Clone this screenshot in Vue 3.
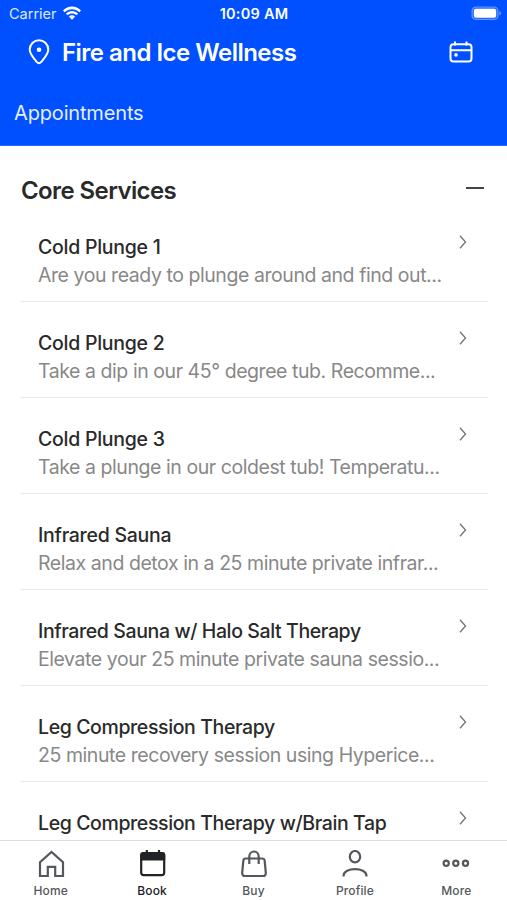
<script setup>
const services = [
  { name: 'Cold Plunge 1', text: 'Are you ready to plunge around and find out...' },
  { name: 'Cold Plunge 2', text: 'Take a dip in our 45° degree tub. Recomme...' },
  { name: 'Cold Plunge 3', text: 'Take a plunge in our coldest tub! Temperatu...' },
  { name: 'Infrared Sauna', text: 'Relax and detox in a 25 minute private infrar...' },
  { name: 'Infrared Sauna w/ Halo Salt Therapy', text: 'Elevate your 25 minute private sauna sessio...' },
  { name: 'Leg Compression Therapy', text: '25 minute recovery session using Hyperice...' },
  { name: 'Leg Compression Therapy w/Brain Tap', text: '' },
]
const tabs = ['Home', 'Book', 'Buy', 'Profile', 'More']
</script>

<template>
  <div class="screen">
    <header class="top">
      <div class="status">
        <div class="carrier">
          <span>Carrier</span>
          <svg width="18" height="14" viewBox="0 0 18 14" fill="#fff">
            <path d="M0 4.6C5-.8 13-.8 18 4.6L16.4 6.3C12.2 2.1 5.8 2.1 1.6 6.3Z" />
            <path d="M2.9 7.6C6.4 4 11.6 4 15.1 7.6L13.5 9.3C10.9 6.8 7.1 6.8 4.5 9.3Z" />
            <path d="M5.8 10.6C7.6 8.9 10.4 8.9 12.2 10.6L9 13.8Z" />
          </svg>
        </div>
        <span class="time">10:09 AM</span>
        <svg class="battery" width="31" height="15" viewBox="0 0 31 15">
          <rect x="1" y="1" width="26" height="12.5" rx="3.8" fill="#fff" fill-opacity=".15" stroke="#fff" stroke-opacity=".35" stroke-width="1.2" />
          <rect x="2.9" y="2.7" width="22.2" height="9.1" rx="2" fill="#fff" />
          <path d="M28.5 5v4.5q3-2.2 0-4.5z" fill="#fff" fill-opacity=".5" />
        </svg>
      </div>
      <div class="title-bar">
        <svg width="22" height="26" viewBox="0 0 22 26" fill="none" stroke="#fff" stroke-width="2">
          <path d="M11 24.2Q9.9 24.2 9 23.2C5.2 18.8 1.7 15.2 1.7 10.6a9.3 9.3 0 0 1 18.6 0C20.3 15.2 16.8 18.8 13 23.2Q12.1 24.2 11 24.2Z" />
          <circle cx="11" cy="10.7" r="2.3" fill="#fff" stroke="none" />
        </svg>
        <h1>Fire and Ice Wellness</h1>
        <svg width="24" height="22" viewBox="0 0 24 22" fill="none" stroke="#fff" stroke-width="2">
          <rect x="1.5" y="3.2" width="21" height="17.3" rx="3" />
          <path d="M1.5 9.3h21M6 .6v4M17.500.6v4" />
          <circle cx="7" cy="13.9" r="1.8" fill="#fff" stroke="none" />
        </svg>
      </div>
      <div class="subtitle">Appointments</div>
    </header>

    <main>
      <div class="section">
        <h2>Core Services</h2>
        <span class="minus"></span>
      </div>
      <ul>
        <li v-for="s in services" :key="s.name">
          <div class="info">
            <h3 :class="{ long: s.name.length > 20 }">{{ s.name }}</h3>
            <p>{{ s.text }}</p>
          </div>
          <svg width="8" height="14" viewBox="0 0 8 14" fill="none" stroke="#777" stroke-width="1.4">
            <path d="M1 .8 6.5 7 1 13.2" />
          </svg>
        </li>
      </ul>
    </main>

    <nav>
      <div v-for="(t, i) in tabs" :key="t" class="tab" :class="{ active: i === 1 }">
        <svg width="30" height="28" viewBox="0 0 30 28" fill="none" stroke="currentColor" stroke-width="2.2">
          <path v-if="i === 0" d="M4 26V12.200L15.500 1.900 27 12.200V26h-7.800v-9.200h-7.400V26Z" />
          <template v-else-if="i === 1">
            <rect x="4.200" y="3.200" width="23" height="22" rx="2.6" />
            <path d="M3.300 10.500V4.500Q3.300 2.300 5.700 2.300h20.200q2.300 0 2.300 2.200v6Z" fill="currentColor" stroke="none" />
            <path d="M9.800 0v3M22 0v3" />
          </template>
          <template v-else-if="i === 2">
            <path d="M6.500 8.500h17Q25.300 8.500 25.600 10.200l1.200 12.500Q27 26 24 26H6Q3 26 3.200 22.700L4.400 10.200Q4.700 8.500 6.500 8.500Z" />
            <path d="M10.300 14V6.500a4.700 5 0 0 1 9.400 0V14" />
          </template>
          <template v-else-if="i === 3">
            <ellipse cx="15" cy="6.700" rx="5.200" ry="5.700" />
            <path d="M3.600 26.500v-1c0-8.600 22.800-8.600 22.800 0v1" />
          </template>
          <template v-else>
            <circle cx="5.200" cy="13.200" r="2.600" />
            <circle cx="14.800" cy="13.200" r="2.600" />
            <circle cx="24.500" cy="13.200" r="2.600" />
          </template>
        </svg>
        <span>{{ t }}</span>
      </div>
    </nav>
  </div>
</template>

<style>
body { margin: 0; background: #fff; }
</style>

<style scoped>
.screen {
  width: 507px;
  height: 900px;
  display: flex;
  flex-direction: column;
  overflow: hidden;
  background: #fff;
  font-family: Inter, "Liberation Sans", sans-serif;
  color: #2a2a2a;
}
h1, h2, h3, p, ul { margin: 0; padding: 0; }
h1, h2, h3, p, span, .subtitle { white-space: nowrap; }
svg { display: block; flex: none; }
.top { height: 146px; flex: none; box-sizing: border-box; background: #0050ff; color: #fff; border-bottom: 1px solid #2a6cff; }
.status {
  height: 27px;
  display: grid;
  grid-template-columns: 1fr auto 1fr;
  align-items: center;
  padding: 0 5px 0 9px;
  box-sizing: border-box;
}
.carrier { display: flex; align-items: center; gap: 6px; font-size: 14.5px; line-height: 20px; color: #dce8ff; }
.carrier svg { margin-bottom: 1px; }
.time { font-size: 14.5px; line-height: 20px; font-weight: 600; letter-spacing: .25px; margin-right: 3px; }
.battery { justify-self: end; }
.title-bar { height: 50px; display: flex; align-items: center; padding: 0 34px 0 28px; }
h1 { margin-left: 12px; padding-top: 1px; flex: 1; font-size: 24px; line-height: 30px; font-weight: 600; letter-spacing: -.52px; }
.subtitle { padding: 23px 0 0 14px; font-size: 20px; line-height: 26px; letter-spacing: -.16px; color: #e6eeff; }
main { flex: 1; min-height: 0; overflow: hidden; }
.section { height: 60px; padding: 30px 23px 0 21px; box-sizing: border-box; display: flex; align-items: center; justify-content: space-between; }
h2 { font-size: 24px; line-height: 30px; font-weight: 600; letter-spacing: -.6px; }
.minus { width: 18px; height: 2px; background: #444; margin-bottom: 6px; }
ul { list-style: none; margin: 0 19px 0 21px; }
li { height: 96.05px; box-sizing: border-box; border-bottom: 1px solid #e9e9e9; padding: 27px 21px 0 17px; display: flex; justify-content: space-between; align-items: flex-start; }
.info { flex: 1; min-width: 0; }
h3 { font-size: 19.5px; line-height: 28px; font-weight: 500; letter-spacing: -.27px; }
h3.long { letter-spacing: -.39px; }
p { font-size: 19.5px; line-height: 28px; letter-spacing: -.44px; color: #888; }
li svg { margin-top: 2px; }
nav { height: 60px; flex: none; box-sizing: border-box; border-top: 1px solid #dedede; background: #fff; display: flex; }
.tab { flex: 1; display: flex; flex-direction: column; align-items: center; padding-top: 9px; color: #54575b; font-size: 12px; line-height: 16px; font-weight: 500; letter-spacing: .1px; }
.tab span { margin-top: 5px; }
.tab.active { color: #202226; }
</style>
